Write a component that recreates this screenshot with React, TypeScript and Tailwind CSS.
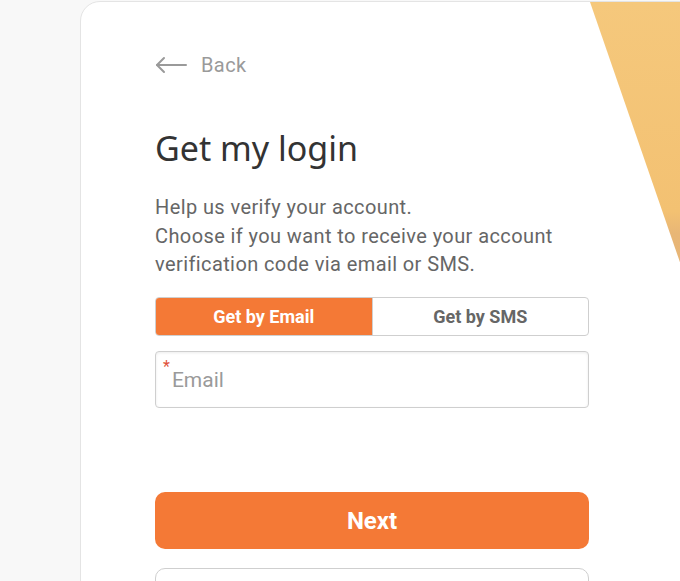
import { useState } from "react";

// Get my login — account verification step
export default function App() {
  const [mode, setMode] = useState<"email" | "sms">("email");

  return (
    <div className="h-[581px] overflow-hidden bg-[#f8f8f8] pl-[80px] pt-px" style={{ fontFamily: "Roboto, 'Liberation Sans', sans-serif" }}>
      <div className="flex w-[800px] h-[700px] rounded-tl-[20px] border border-[#e4e4e4] bg-white overflow-hidden">
        {/* Form column */}
        <div className="w-[509px] flex-none pl-[74px] pt-[51px]">
          <button className="flex items-center gap-[14px] text-[#9a9a9a]">
            <svg width="32" height="18" viewBox="0 0 32 18" fill="none" stroke="currentColor" strokeWidth="2" strokeLinecap="round" strokeLinejoin="round">
              <path d="M31 9H2" />
              <path d="M9 2L2 9l7 7" />
            </svg>
            <span className="text-[20px] leading-[24px] tracking-[0.4px]">Back</span>
          </button>

          <h1 className="mt-[49px] text-[34px] leading-[44px] text-[#333]" style={{ fontFamily: "'Noto Sans', 'Open Sans', sans-serif" }}>
            Get my login
          </h1>

          <p className="mt-[23px] text-[20px] leading-[28.5px] tracking-[0.4px] text-[#666]">
            Help us verify your account.
            <br />
            Choose if you want to receive your account verification code via email or SMS.
          </p>

          <div className="mt-[18px] flex h-[39px] w-[434px] rounded-[4px] border border-[#cfcfcf] overflow-hidden">
            <button
              onClick={() => setMode("email")}
              className={`flex-1 text-[18px] font-bold ${mode === "email" ? "bg-[#f47936] text-white" : "text-[#666]"}`}
            >
              Get by Email
            </button>
            <button
              onClick={() => setMode("sms")}
              className={`flex-1 border-l border-[#cfcfcf] text-[18px] font-bold ${mode === "sms" ? "bg-[#f47936] text-white" : "text-[#666]"}`}
            >
              Get by SMS
            </button>
          </div>

          <label className="mt-[15px] flex h-[57px] w-[434px] rounded-[4px] border border-[#cfcfcf] shadow-[inset_0_1px_3px_rgba(0,0,0,0.08)]">
            <span className="pl-[7px] pt-[7px] text-[16px] leading-[16px] text-[#e0523a]">*</span>
            <input
              placeholder="Email"
              className="ml-[2px] flex-1 bg-transparent pt-[4px] text-[21px] text-[#333] placeholder:text-[#9a9a9a] outline-none"
            />
          </label>

          <button className="mt-[84px] h-[57px] w-[434px] rounded-[10px] bg-[#f47936] pt-px text-[24px] font-bold text-white">
            Next
          </button>

          <div className="mt-[19px] h-[56px] w-[434px] rounded-[10px] border border-[#cfcfcf]" />
        </div>

        {/* Image panel */}
        <div className="flex-1">
          <svg width="291" height="700" viewBox="0 0 291 700" preserveAspectRatio="none">
            <defs>
              <linearGradient id="warm" x1="0" y1="0" x2="0" y2="1">
                <stop offset="0" stopColor="#f5c87c" />
                <stop offset="0.3" stopColor="#f3c172" />
                <stop offset="0.33" stopColor="#e8b676" />
                <stop offset="1" stopColor="#dcab6e" />
              </linearGradient>
            </defs>
            <polygon points="0,0 291,0 291,700 242,700" fill="url(#warm)" />
          </svg>
        </div>
      </div>
    </div>
  );
}
